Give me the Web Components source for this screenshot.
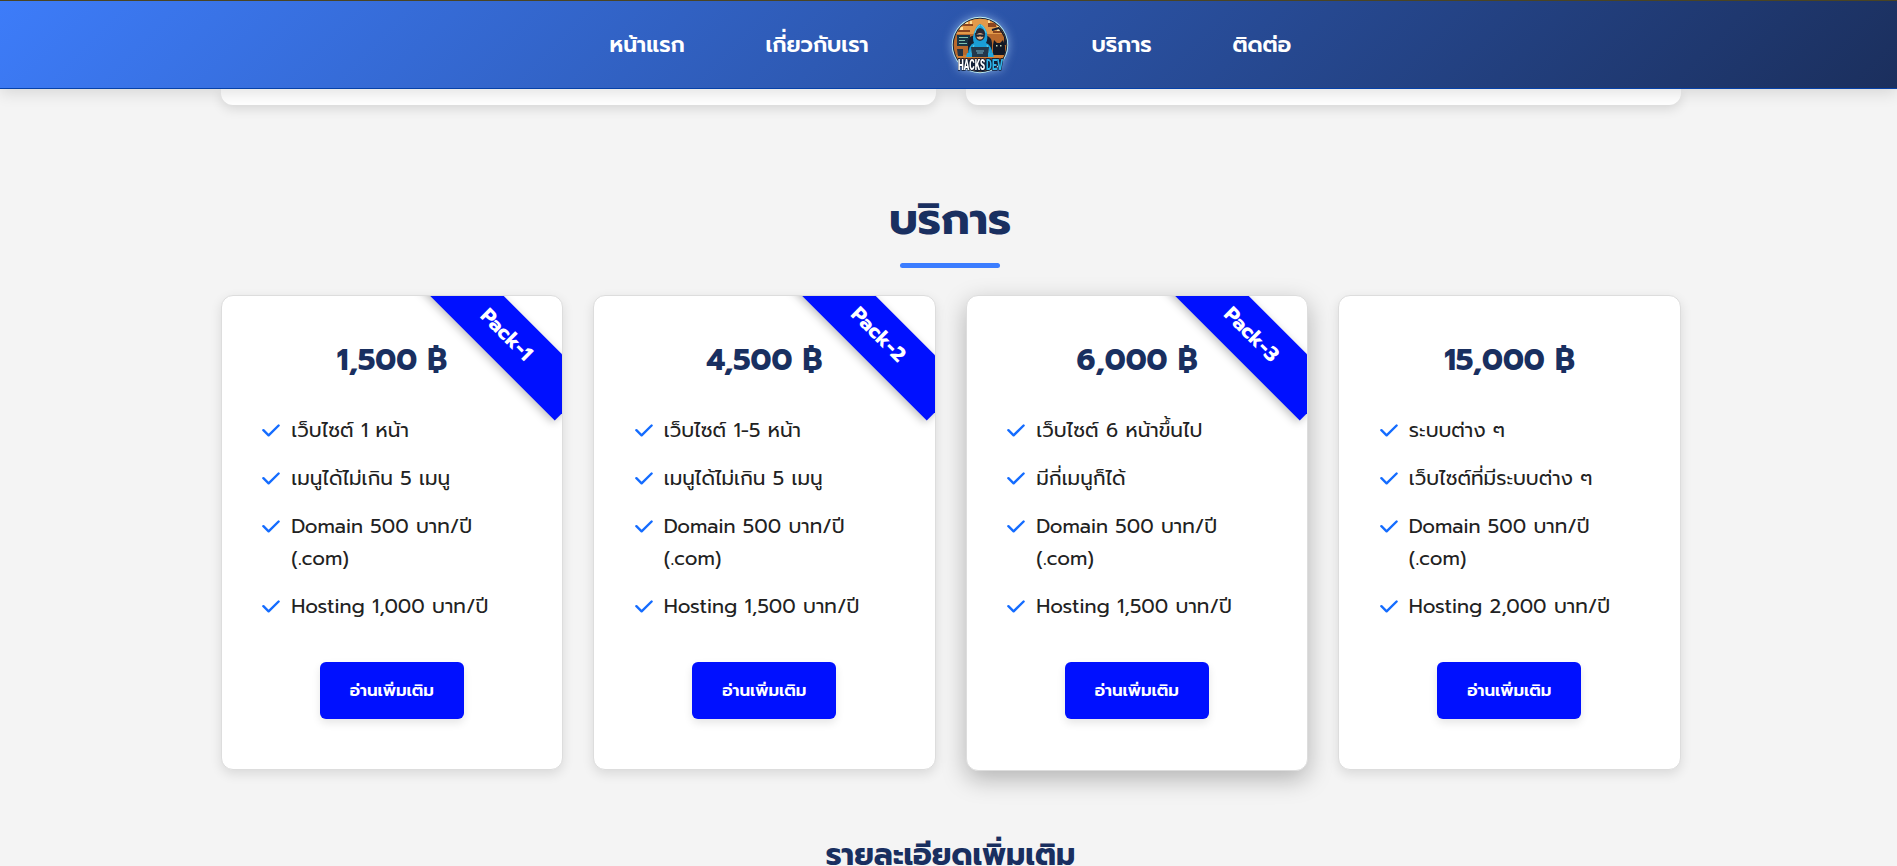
<!DOCTYPE html>
<html lang="th">
<head>
<meta charset="utf-8">
<title>HACKSDEV</title>
<style>
html,body{margin:0;height:866px;overflow:hidden}
body{background:#f4f4f4;color:#222;font-family:Prompt,Kanit,"Noto Sans Thai","Inter",sans-serif}
</style>
</head>
<body>
<hd-page></hd-page>
<script>
const define=(name,html)=>{
  const t=document.createElement('template');t.innerHTML=html;
  customElements.define(name,class extends HTMLElement{
    connectedCallback(){
      if(this.shadowRoot)return;
      this.attachShadow({mode:'open'}).append(t.content.cloneNode(true));
    }
  });
};

define('hd-logo',`<style>:host{display:block;flex:none;width:60px;height:60px}svg{display:block;overflow:visible;filter:drop-shadow(0 0 5px rgba(190,225,255,.6))}</style>
<svg width="60" height="60" viewBox="0 0 60 60">
<defs><clipPath id="c"><circle cx="30" cy="30" r="26.3"/></clipPath></defs>
<circle cx="30" cy="30" r="28.2" fill="#bfeef0"/><circle cx="30" cy="30" r="27.3" fill="#14223a"/>
<g clip-path="url(#c)">
<rect width="60" height="60" fill="#b9692c"/>
<path d="M0 0h60v19H0z" fill="#e39a4a"/>
<path d="M12 9h11v2H12zM38 8h8v4h-8zM8 15h12v2H8zM43 16h12v2H43z" fill="#8a451f"/>
<path d="M15 5h3v4h-3zM20 6h2v3h-2zM38 5h2v3h-2zM47 11h3v5h-3zM10 12h3v3h-3z" fill="#ffe09a"/>
<rect x="7" y="20" width="13" height="11" fill="#173546"/><path d="M9 22.500h9M9 25.500h6M9 28.500h8" stroke="#7fc0ae" stroke-width="1.200"/>
<path d="M18 26q2-6 7-5v20h-7zM35 20q7 2 7 8v13h-7z" fill="#18202f"/>
<path d="M42 15l7-2 4 5M50 13l5 9v8" stroke="#151d2c" stroke-width="2" fill="none"/>
<path d="M43 41V30l1-5 3 3h3l3-3 2 6v10z" fill="#111724"/>
<path d="M46 30h1.500v1.500H46zM50 30h1.500v1.500H50z" fill="#c7d9b0"/>
<path d="M18 41q0-11 6-13-2-5 0-10 2-7 6-9 5 2 7 9 1 6-1 10 6 2 7 13z" fill="#1a9ed6"/>
<path d="M25 19q0-5 5-6 5 1 5 6 0 6-5 7-5-1-5-7z" fill="#2a2731"/>
<path d="M26 20q4-4 8 0l-1 3q-3 3-6 0z" fill="#e5b182"/>
<path d="M26 19.500h8v2.300h-3l-1-.8-1 .8h-3z" fill="#1c2635"/>
<path d="M30 10q-4 3-5 8M31 10q4 3 5 8M24 30l-3 8M37 30l2 8" stroke="#54c8e8" stroke-width="1.200" fill="none"/>
<path d="M0 40h60v20H0z" fill="#d07e33"/><path d="M0 43h60v3H0z" fill="#6b371d"/>
<path d="M21 32h18l-1 10H22z" fill="#23384b"/><path d="M26 36h8M27 38h6" stroke="#78b6cd"/>
<path d="M17 38h5v4h-6zM38 38h5l1 4h-6z" fill="#25a6dc"/>
<path d="M7 34h6v7H8z" fill="#263342"/><path d="M0 45h60v15H0z" fill="#14223a"/>
</g>
<g font-family="Roboto,sans-serif" font-size="14.500" font-weight="900" stroke="#0d1930" stroke-width="1.600" paint-order="stroke">
<text x="8" y="54.800" textLength="27" lengthAdjust="spacingAndGlyphs" fill="#fff">HACKS</text>
<text x="36" y="54.800" textLength="17" lengthAdjust="spacingAndGlyphs" fill="#31b5e9">DEV</text></g>
</svg>`);

define('hd-header',`<style>
:host{display:block;box-sizing:border-box;height:89px;border-top:1px solid #4a4423;border-bottom:1px solid #0641a8;background:linear-gradient(135deg,#3d7cf9,#1b2f5d);box-shadow:0 4px 15px rgba(0,0,0,.12);position:relative;z-index:2}
nav{display:grid;grid-template-columns:156px 184px 142px 141px auto;align-items:center;height:87px;padding-left:609.500px;color:#fff;font-size:21.800px;font-weight:600;line-height:36px;white-space:nowrap}
</style><nav><span>หน้าแรก</span><span>เกี่ยวกับเรา</span><hd-logo></hd-logo><span>บริการ</span><span>ติดต่อ</span></nav>`);

define('hd-panel',`<style>:host{display:block;height:16px;border-radius:0 0 12px 12px;background:#fff;box-shadow:0 4px 12px rgba(0,0,0,.12)}</style>`);

define('hd-feature',`<style>:host{display:flex;line-height:32px;font-size:20px;margin-bottom:16px;color:#222;white-space:nowrap}
svg{flex:none;width:18px;height:13px;margin:9.500px 11px 0 0}</style>
<svg viewBox="0 0 18 13"><path d="M1.400 6.200 6.600 11.300 16.600 1.500" fill="none" stroke="#146cff" stroke-width="2.400" stroke-linecap="round" stroke-linejoin="round"/></svg><div><slot></slot></div>`);

define('hd-ribbon',`<style>:host{position:absolute;right:-38.700px;top:12.700px;width:190px;height:52px;display:flex;align-items:center;justify-content:center;transform:rotate(45deg);background:#0010ff;color:#fff;font-size:20.500px;font-weight:700;line-height:28px;box-shadow:0 3px 8px rgba(0,0,0,.25)}</style><slot></slot>`);

define('hd-button',`<style>:host{display:flex;align-items:center;justify-content:center;width:144px;height:57px;border-radius:6px;background:#0010ff;color:#fff;font-size:16.700px;font-weight:600;line-height:26px;box-shadow:0 4px 8px rgba(0,0,0,.1)}</style><slot></slot>`);

define('hd-card',`<style>
:host{display:block;box-sizing:border-box;height:475px;border:1px solid #ddd;border-radius:12px;background:#fff;box-shadow:0 4px 12px rgba(0,0,0,.11)}
:host([raised]){height:476px;box-shadow:0 8px 24px rgba(0,0,0,.27)}
.in{position:relative;overflow:hidden;height:100%;border-radius:11px;display:flex;flex-direction:column}
.price{display:flex;justify-content:center;margin-top:40px;height:48px;line-height:48px;font-size:30.100px;font-weight:700;color:#192f60;margin-bottom:30px}
.list{padding-left:40.500px;height:226px}
hd-button{margin:22px 0 0 98px}
</style><div class="in"><div class="price"><slot name="price"></slot></div><div class="list"><slot></slot></div><hd-button>อ่านเพิ่มเติม</hd-button><slot name="ribbon"></slot></div>`);

define('hd-title',`<style>:host{display:flex;flex-direction:column;align-items:center;color:#192f60;font-weight:700;font-size:44px;line-height:64px;padding-top:1px}
i{display:block;width:100px;height:5px;border-radius:3px;background:#3b7dff;margin-top:11px}:host([small]){font-size:30.200px;line-height:46px}:host([small]) i{display:none}</style><slot></slot><i></i>`);

const packs=[
 ['1,500 ฿','Pack-1','เว็บไซต์ 1 หน้า','เมนูได้ไม่เกิน 5 เมนู','Hosting 1,000 บาท/ปี'],
 ['4,500 ฿','Pack-2','เว็บไซต์ 1-5 หน้า','เมนูได้ไม่เกิน 5 เมนู','Hosting 1,500 บาท/ปี'],
 ['6,000 ฿','Pack-3','เว็บไซต์ 6 หน้าขึ้นไป','มีกี่เมนูก็ได้','Hosting 1,500 บาท/ปี'],
 ['15,000 ฿','','ระบบต่าง ๆ','เว็บไซต์ที่มีระบบต่าง ๆ','Hosting 2,000 บาท/ปี']
];
const item=t=>`<hd-feature>${t}</hd-feature>`;
const cards=packs.map(([p,r,a,b,h],i)=>`<hd-card${i===2?' raised':''}><span slot="price">${p}</span>${r?`<hd-ribbon slot="ribbon">${r}</hd-ribbon>`:''}${item(a)}${item(b)}${item('Domain 500 บาท/ปี<br>(.com)')}${item(h)}</hd-card>`).join('');

define('hd-page',`<style>
:host{display:block;height:866px;overflow:hidden}
.top{display:grid;grid-template-columns:715px 715px;column-gap:30px;padding-left:220.800px}
.h1{margin:82px 0 0;padding-left:3px}
.cards{display:grid;grid-template-columns:repeat(4,342.500px);column-gap:30px;padding-left:220.800px;margin-top:27px;height:475px}
.h2{margin-top:60.500px;padding-left:4px}
</style><hd-header></hd-header><div class="top"><hd-panel></hd-panel><hd-panel></hd-panel></div>
<hd-title class="h1">บริการ</hd-title>
<div class="cards">${cards}</div>
<hd-title small class="h2">รายละเอียดเพิ่มเติม</hd-title>`);
</script>
</body>
</html>
